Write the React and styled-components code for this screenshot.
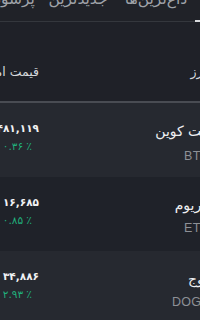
import React from "react";
import styled, { createGlobalStyle } from "styled-components";

const GlobalStyle = createGlobalStyle`
  html, body {
    margin: 0;
    padding: 0;
    background: #1f2128;
    overflow: hidden;
  }
`;

const Screen = styled.div`
  width: 200px;
  height: 320px;
  overflow: hidden;
  background: #1f2128;
`;

const Page = styled.div`
  direction: rtl;
  width: 272px;
  margin-left: -40px;
  font-family: "DejaVu Sans", "Noto Sans", sans-serif;
  color: #e9eaec;
`;

const TabBar = styled.div`
  display: flex;
  align-items: stretch;
  height: 26px;
  margin-top: -5px;
  margin-right: -41px;
  border-bottom: 1px solid #34373d;
  background: #202228;
`;

const Tab = styled.div`
  flex: 0 0 78px;
  text-align: center;
  font-size: 15.5px;
  line-height: 8px;
  white-space: nowrap;
  color: ${(p) => (p.active ? "#ffffff" : "#9fa2a8")};
  border-bottom: 2px solid ${(p) => (p.active ? "#d8dade" : "transparent")};
  margin-bottom: -1px;
`;

const HeadRow = styled.div`
  display: flex;
  justify-content: space-between;
  align-items: center;
  height: 81px;
  padding: 19px 26px 0 14px;
  box-sizing: border-box;
  font-size: 12.5px;
  color: #d6d8dc;
  border-bottom: 2px solid #494c53;
`;

const PriceHead = styled.span`
  width: 65px;
  white-space: nowrap;
`;

const CoinRow = styled.div`
  display: flex;
  justify-content: space-between;
  align-items: flex-start;
  height: 74px;
  padding: 20px 22px 0 14px;
  box-sizing: border-box;
  background: ${(p) => (p.shade ? "#262930" : "#1f2229")};
`;

const Side = styled.div`
  display: flex;
  flex-direction: column;
  align-items: flex-start;
  width: ${(p) => (p.narrow ? "65px" : "auto")};
  margin-top: ${(p) => p.lift || 0}px;
  gap: ${(p) => p.gap}px;
`;

const Name = styled.div`
  font-size: 14px;
  line-height: 16px;
  color: #eeeff1;
  white-space: nowrap;
`;

const Symbol = styled.div`
  font-family: "Liberation Sans", sans-serif;
  font-size: 12.5px;
  line-height: 14px;
  color: #8d9096;
  letter-spacing: 0.3px;
`;

const Price = styled.div`
  direction: ltr;
  font-size: 10.5px;
  line-height: 16px;
  font-weight: bold;
  letter-spacing: -0.8px;
  color: #f1f2f4;
  white-space: nowrap;
`;

const Change = styled.div`
  direction: ltr;
  font-size: 10.5px;
  line-height: 14px;
  margin-right: 7px;
  color: #21b07c;
  white-space: nowrap;
`;

const coins = [
  { name: "بیت کوین", symbol: "BTC", price: "۲,۴۸۱,۱۱۹", change: "۰.۳۶ ٪" },
  { name: "اتریوم", symbol: "ETH", price: "۱۶,۶۸۵", change: "۰.۸۵ ٪" },
  { name: "دوج", symbol: "DOGE", price: "۳۴,۸۸۶", change: "۲.۹۳ ٪" },
];

export default function App() {
  return (
    <Screen>
      <GlobalStyle />
      <Page>
        <TabBar>
          <Tab active>همه</Tab>
          <Tab>داغ‌ترین‌ها</Tab>
          <Tab>جدیدترین</Tab>
          <Tab>پرسودترین</Tab>
        </TabBar>
        <HeadRow>
          <span>ارز</span>
          <PriceHead>قیمت امروز</PriceHead>
        </HeadRow>
        {coins.map((c, i) => (
          <CoinRow key={c.symbol} shade={i % 2 === 0}>
            <Side gap={i === 0 ? 10 : 8}>
              <Name>{c.name}</Name>
              <Symbol>{c.symbol}</Symbol>
            </Side>
            <Side narrow lift={-3} gap={3}>
              <Price>{c.price}</Price>
              <Change>{c.change}</Change>
            </Side>
          </CoinRow>
        ))}
      </Page>
    </Screen>
  );
}
